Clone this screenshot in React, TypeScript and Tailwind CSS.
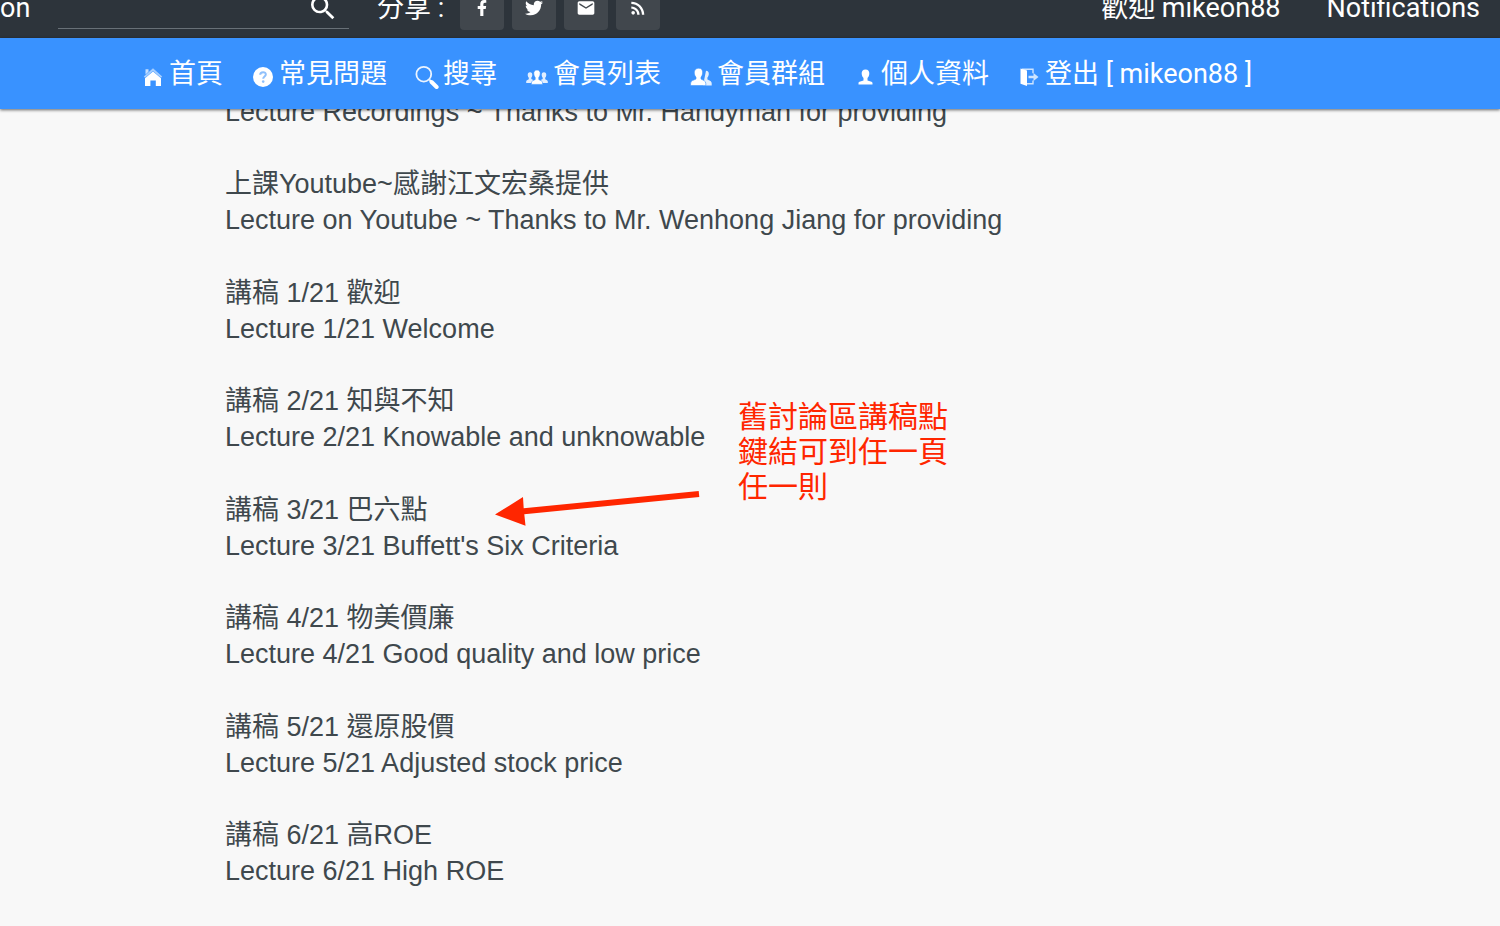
import type { ReactNode } from "react";
import { clsx } from "clsx";
import { MdEmail, MdRssFeed, MdSearch } from "react-icons/md";
import { FaFacebookF, FaTwitter } from "react-icons/fa";

const HomeIcon = () => (
  <svg viewBox="0 0 24 24" className="size-6" fill="currentColor" aria-hidden="true">
    <path d="M4.500 4.200h3v2.600l-3 2.600z" opacity=".7" />
    <path d="M12 3.300 21.200 11.400 20 12.800 12 6 4 12.800 2.800 11.400z" opacity=".55" />
    <path d="M12 6.600 20 13.200V21h-5.200v-5.400H9.400V21H4v-7.800z" />
  </svg>
);

const HelpIcon = () => (
  <svg viewBox="0 0 24 24" className="size-6" aria-hidden="true">
    <circle cx="12" cy="12" r="10" fill="currentColor" />
    <path d="M9.2 9.8c0-3.6 6-3.4 5.6-.2-.2 1.8-2.6 2-2.6 4.2" fill="none" stroke="#8fc0fb" strokeWidth="2" />
    <circle cx="12.2" cy="16.6" r="1.3" fill="#8fc0fb" />
  </svg>
);

const FindIcon = () => (
  <svg viewBox="0 0 24 24" className="size-6" fill="none" stroke="currentColor" aria-hidden="true">
    <circle cx="8.8" cy="9.2" r="7.4" strokeWidth="1.8" opacity=".9" />
    <path d="m14.6 15 2 2" strokeWidth="2" />
    <path d="m16.6 17 5 5" strokeWidth="4" strokeLinecap="round" />
  </svg>
);

const MembersIcon = () => (
  <svg viewBox="0 0 24 24" className="size-6" fill="currentColor" aria-hidden="true">
    <g opacity=".85">
      <path d="M5 7.2c1.6 0 2.5 1.2 2.3 3-.1 1.2-.6 2-1 2.5v1.4l2 1V18H1.2v-1.4c0-1.4 1.3-1.5 2.6-2.3v-1.6c-.5-.6-1-1.4-1.1-2.5-.1-1.8.8-3 2.3-3z" />
      <path d="M19 7.2c-1.6 0-2.5 1.2-2.3 3 .1 1.2.6 2 1 2.5v1.4l-2 1V18h7.1v-1.400c0-1.400-1.300-1.500-2.600-2.300v-1.600c.5-.6 1-1.400 1.100-2.500.1-1.800-.8-3-2.300-3z" />
    </g>
    <path d="M12 5c2.400 0 3.500 1.700 3.200 4-.2 1.700-.8 2.700-1.400 3.400v2.100c1.800 1 3.600 1.200 3.800 3.300v1.600H6.400v-1.600c.2-2.100 2-2.300 3.800-3.300v-2.100c-.6-.7-1.200-1.700-1.400-3.400C8.500 6.700 9.600 5 12 5z" stroke="#3992ff" strokeWidth=".6" />
  </svg>
);

const GroupsIcon = () => (
  <svg viewBox="0 0 24 24" className="size-6" fill="currentColor" aria-hidden="true">
    <path d="M17 5.800c2 0 3 1.500 2.800 3.500-.2 1.600-.8 2.600-1.400 3.300v1.800c2 1 4.300 1.400 4.300 4V20.400H14z" opacity=".85" />
    <path d="M9.800 3.200c2.800 0 4.100 2 3.800 4.900-.2 2-.9 3.200-1.600 4V14c2 1.300 4.800 1.500 4.800 4.600V20.600H1.600v-2c0-3.100 3-3.300 5.400-4.600v-1.900c-.8-.8-1.500-2-1.700-4C5 5.200 7 3.200 9.800 3.200z" stroke="#3992ff" strokeWidth=".6" />
  </svg>
);

const ProfileIcon = () => (
  <svg viewBox="0 0 24 24" className="size-6" fill="currentColor" aria-hidden="true">
    <path d="M12.500 4.600c2.700 0 4.100 1.900 3.800 4.400-.2 1.900-1 3.200-1.800 4v2.600c1.900.9 5 .8 5 2.700V19.600H5.500v-1.300c0-1.900 3.100-1.800 5-2.700V13c-.8-.8-1.600-2.100-1.800-4-.3-2.500 1.100-4.400 3.800-4.400z" />
  </svg>
);

const LogoutIcon = () => (
  <svg viewBox="0 0 24 24" className="size-6" fill="currentColor" aria-hidden="true">
    <path d="M3.500 3.600 10 5.600v15.400l-6.500-2.200z" />
    <path d="M5 4.200h11v4M16 15.600v3.200h-6" fill="none" stroke="currentColor" strokeWidth="1.400" opacity=".75" />
    <path d="M11.500 10.700h5V8l5 4-5 4v-2.700h-5z" opacity=".75" />
  </svg>
);

const navItems: { label: string; icon: ReactNode }[] = [
  { label: "首頁", icon: <HomeIcon /> },
  { label: "常見問題", icon: <HelpIcon /> },
  { label: "搜尋", icon: <FindIcon /> },
  { label: "會員列表", icon: <MembersIcon /> },
  { label: "會員群組", icon: <GroupsIcon /> },
  { label: "個人資料", icon: <ProfileIcon /> },
  { label: "登出 [ mikeon88 ]", icon: <LogoutIcon /> },
];

const shareLinks: { name: string; icon: ReactNode }[] = [
  { name: "Facebook", icon: <FaFacebookF className="size-4" /> },
  { name: "Twitter", icon: <FaTwitter className="size-[18px]" /> },
  { name: "Email", icon: <MdEmail className="size-5" /> },
  { name: "RSS", icon: <MdRssFeed className="size-5" /> },
];

const lectures: { zh?: string; en: string; note?: boolean }[] = [
  { en: "Lecture Recordings ~ Thanks to Mr. Handyman for providing" },
  { zh: "上課Youtube~感謝江文宏桑提供", en: "Lecture on Youtube ~ Thanks to Mr. Wenhong Jiang for providing" },
  { zh: "講稿 1/21 歡迎", en: "Lecture 1/21 Welcome" },
  { zh: "講稿 2/21 知與不知", en: "Lecture 2/21 Knowable and unknowable" },
  { zh: "講稿 3/21 巴六點", en: "Lecture 3/21 Buffett's Six Criteria", note: true },
  { zh: "講稿 4/21 物美價廉", en: "Lecture 4/21 Good quality and low price" },
  { zh: "講稿 5/21 還原股價", en: "Lecture 5/21 Adjusted stock price" },
  { zh: "講稿 6/21 高ROE", en: "Lecture 6/21 High ROE" },
];

function TopBar() {
  return (
    <header className="flex h-[38px] items-end overflow-hidden bg-[#2d343b] pb-2 text-white">
      <div className="flex h-11 w-full items-center whitespace-nowrap">
        <a href="#" className="w-[58px]">on</a>
        <form className="flex h-[42px] w-[291px] items-center border-b border-[#687077] pr-2.5">
          <input type="search" aria-label="搜尋" className="min-w-0 flex-1 bg-transparent outline-none" />
          <button type="button" aria-label="搜尋">
            <MdSearch className="size-8" />
          </button>
        </form>
        <span className="ml-7">分享 :</span>
        <div className="ml-4 flex gap-2">
          {shareLinks.map((s) => (
            <a key={s.name} href="#" aria-label={s.name} className="flex size-11 items-center justify-center rounded bg-[#41474d]">
              {s.icon}
            </a>
          ))}
        </div>
        <div className="ml-auto flex gap-[46px] pr-5">
          <a href="#">歡迎 mikeon88</a>
          <a href="#">Notifications</a>
        </div>
      </div>
    </header>
  );
}

function NavBar() {
  return (
    <nav className="relative z-10 flex h-[71px] items-center gap-7 bg-[#3992ff] pl-[141px] whitespace-nowrap text-white shadow-[0_1px_3px_rgba(0,0,0,0.6)]">
      {navItems.map((item) => (
        <a key={item.label} href="#" className="flex items-center gap-1">
          <span className="mt-1.5">{item.icon}</span>
          {item.label}
        </a>
      ))}
    </nav>
  );
}

function Note() {
  return (
    <div className="absolute -top-[93px] left-[270px] flex items-end gap-[38px] text-[#ff2600]">
      <svg viewBox="0 0 205 36" className="h-9 w-[205px]" fill="currentColor" aria-hidden="true">
        <path d="M0 24.500 28 7l.7 11.200L203.700 1l.6 6L29.300 24.200l1.200 11.600z" />
      </svg>
      <p className="mb-[22px] text-[30px] leading-[35px] whitespace-nowrap">
        舊討論區講稿點
        <br />
        鍵結可到任一頁
        <br />
        任一則
      </p>
    </div>
  );
}

export default function App() {
  return (
    <div className="min-h-screen bg-[#f8f8f8] font-[Roboto,'Noto_Sans_CJK_TC',sans-serif] text-[27px] leading-9">
      <TopBar />
      <NavBar />
      <main className="-mt-[15px] pl-[225px] font-['Liberation_Sans','Noto_Sans_CJK_TC',sans-serif] text-[#3f484d]">
        <ul>
          {lectures.map((l) => (
            <li key={l.en} className={clsx("odd:mb-9 even:mb-[37px]", l.note && "relative")}>
              {l.zh && <p>{l.zh}</p>}
              <p>{l.en}</p>
              {l.note && <Note />}
            </li>
          ))}
        </ul>
      </main>
    </div>
  );
}
